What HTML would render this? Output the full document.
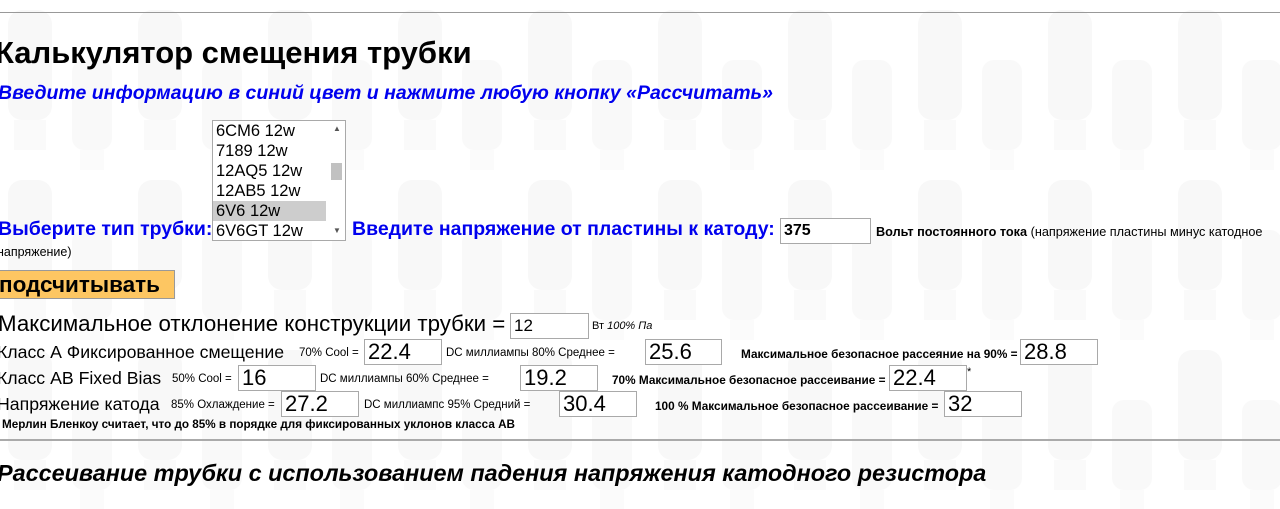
<!DOCTYPE html>
<html><head><meta charset="utf-8"><style>
body{margin:0;width:1280px;height:509px;overflow:hidden;position:relative;background:#fff;font-family:"Liberation Sans",Arial,sans-serif;color:#000}
.bg{position:absolute;inset:0;z-index:0}
.a{position:absolute;white-space:nowrap;z-index:1}
.in{position:absolute;z-index:1;background:#fff;border:1px solid #a9a9a9;box-sizing:border-box;font-size:22px;padding:0 3px;line-height:23px}
.blue{color:#0000ee;font-weight:bold;font-size:19.5px}
.s{font-size:11.5px}
.b{font-weight:bold;font-size:11.8px}
.r{font-size:17.7px}
</style></head><body>
<svg class="bg" width="1280" height="509">
<defs><pattern id="p" width="130" height="170" patternUnits="userSpaceOnUse">
<rect x="8" y="10" width="44" height="110" rx="14" fill="#f8f8f8"/>
<rect x="14" y="120" width="32" height="30" fill="#fafafa"/>
<rect x="72" y="60" width="40" height="90" rx="12" fill="#f9f9f9"/>
<rect x="80" y="150" width="24" height="20" fill="#fbfbfb"/>
</pattern></defs>
<rect width="1280" height="509" fill="url(#p)"/>
</svg>
<div class="a" style="left:0;top:12px;width:1280px;height:1px;background:#999"></div>
<div class="a" style="left:0;top:439px;width:1280px;height:2px;background:#aaa"></div>
<div class="a" style="left:-5px;top:35px;font-size:31px;font-weight:bold">Калькулятор смещения трубки</div>
<div class="a blue" style="left:-2px;top:82px;font-style:italic">Введите информацию в синий цвет и нажмите любую кнопку «Рассчитать»</div>
<div class="a" style="left:212px;top:120px;width:134px;height:121px;border:1px solid #a9a9a9;background:#fff;box-sizing:border-box;font-size:16.5px;line-height:20px;overflow:hidden">
<div style="padding-left:3px">6CM6 12w</div><div style="padding-left:3px">7189 12w</div><div style="padding-left:3px">12AQ5 12w</div><div style="padding-left:3px">12AB5 12w</div><div style="padding-left:3px;background:#cdcdcd;width:110px">6V6 12w</div><div style="padding-left:3px">6V6GT 12w</div>
<div style="position:absolute;right:0;top:0;width:17px;height:119px;background:#fff"><div style="position:absolute;left:3px;top:42px;width:11px;height:17px;background:#c1c1c1"></div><div style="position:absolute;left:5px;top:4px;font-size:8px;line-height:8px;color:#555">▲</div><div style="position:absolute;left:5px;top:106px;font-size:8px;line-height:8px;color:#555">▼</div></div>
</div>
<div class="a blue" style="left:-2px;top:218px">Выберите тип трубки:</div>
<div class="a blue" style="left:352px;top:218px">Введите напряжение от пластины к катоду:</div>
<div class="in" style="left:780px;top:218px;width:91px;height:26px;font-size:16px;font-weight:bold">375</div>
<div class="a" style="left:876px;top:225px;font-size:12.7px"><b>Вольт постоянного тока</b> (напряжение пластины минус катодное</div>
<div class="a" style="left:-3px;top:245px;font-size:12.5px">напряжение)</div>
<div class="a" style="left:-6px;top:270px;width:181px;height:29px;background:#fdc662;border:1px solid #999;box-sizing:border-box;font-size:22.5px;font-weight:bold;line-height:27px;padding-left:4px">подсчитывать</div>
<div class="a" style="left:-2px;top:311px;font-size:22.3px">Максимальное отклонение конструкции трубки =</div>
<div class="in" style="left:510px;top:313px;width:79px;height:26px;font-size:17px">12</div>
<div class="a" style="left:592px;top:320px;font-size:11px">Вт <i>100% Па</i></div>

<div class="a r" style="left:-3px;top:342px">Класс А Фиксированное смещение</div>
<div class="a s" style="left:299px;top:347px">70% Cool =</div>
<div class="in" style="left:364px;top:339px;width:78px;height:26px">22.4</div>
<div class="a s" style="left:446px;top:347px">DC миллиампы 80% Среднее =</div>
<div class="in" style="left:645px;top:339px;width:77px;height:26px">25.6</div>
<div class="a b" style="left:741px;top:347px">Максимальное безопасное рассеяние на 90% =</div>
<div class="in" style="left:1020px;top:339px;width:78px;height:26px">28.8</div>

<div class="a r" style="left:-3px;top:368px">Класс AB Fixed Bias</div>
<div class="a s" style="left:172px;top:373px">50% Cool =</div>
<div class="in" style="left:238px;top:365px;width:78px;height:26px">16</div>
<div class="a s" style="left:320px;top:373px">DC миллиампы 60% Среднее =</div>
<div class="in" style="left:520px;top:365px;width:78px;height:26px">19.2</div>
<div class="a b" style="left:612px;top:373px">70% Максимальное безопасное рассеивание =</div>
<div class="in" style="left:889px;top:365px;width:78px;height:26px">22.4</div>
<div class="a" style="left:967px;top:366px;font-size:11px">*</div>

<div class="a r" style="left:-3px;top:394px">Напряжение катода</div>
<div class="a s" style="left:171px;top:399px">85% Охлаждение =</div>
<div class="in" style="left:281px;top:391px;width:78px;height:26px">27.2</div>
<div class="a s" style="left:364px;top:399px">DC миллиампс 95% Средний =</div>
<div class="in" style="left:559px;top:391px;width:78px;height:26px">30.4</div>
<div class="a b" style="left:655px;top:399px">100 % Максимальное безопасное рассеивание =</div>
<div class="in" style="left:944px;top:391px;width:78px;height:26px">32</div>
<div class="a" style="left:2px;top:418px;font-size:11.7px;font-weight:bold">Мерлин Бленкоу считает, что до 85% в порядке для фиксированных уклонов класса AB</div>
<div class="a" style="left:-3px;top:460px;font-size:23.4px;font-weight:bold;font-style:italic">Рассеивание трубки с использованием падения напряжения катодного резистора</div>
</body></html>
